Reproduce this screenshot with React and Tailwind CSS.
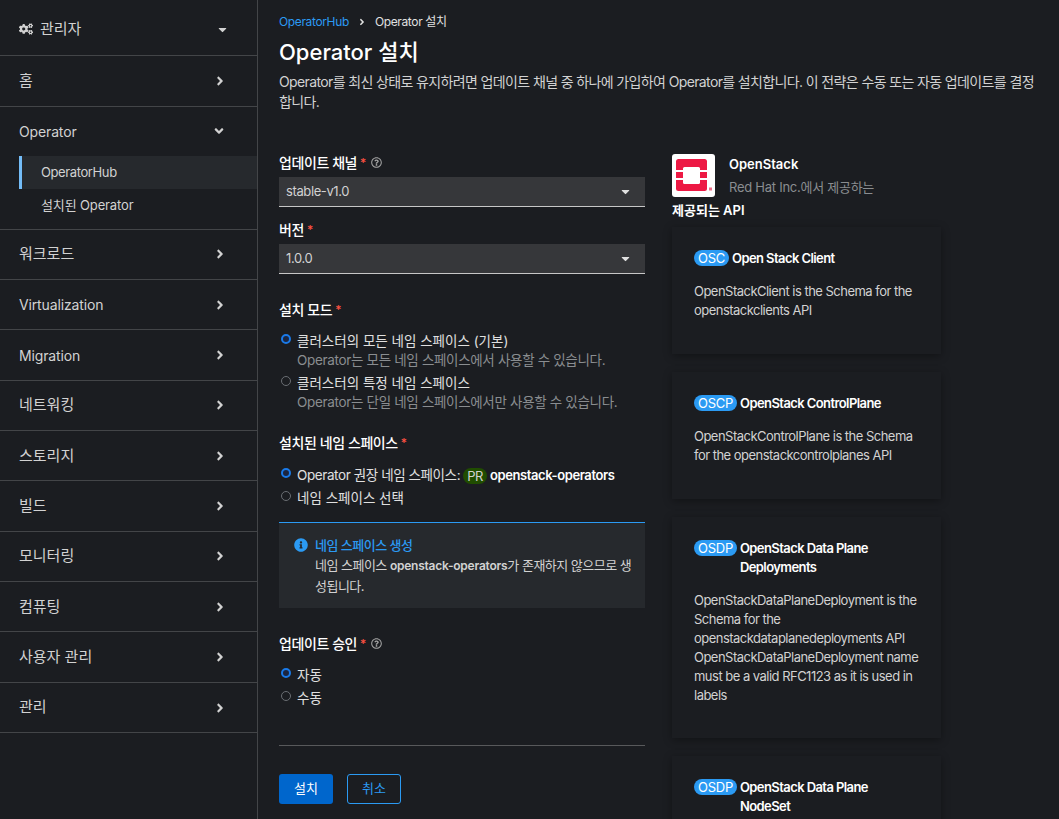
import React from 'react';
import { FaCogs, FaAngleRight, FaAngleDown, FaCaretDown, FaRegQuestionCircle, FaInfoCircle } from 'react-icons/fa';

const navAfter = [
  { label: '워크로드' },
  { label: 'Virtualization', latin: true },
  { label: 'Migration', latin: true },
  { label: '네트워킹' },
  { label: '스토리지' },
  { label: '빌드' },
  { label: '모니터링' },
  { label: '컴퓨팅' },
  { label: '사용자 관리' },
  { label: '관리' },
];

const NavItem = ({ label, latin }) => (
  <div className={`h-[50.35px] border-b border-[#434548] flex items-center justify-between pl-[19px] pr-[32px] text-[#d2d2d2] ${latin ? 'text-[14px] tracking-[-0.01em]' : 'text-[15px]'}`}>
    <span>{label}</span>
    <FaAngleRight className="w-[10px] h-[14px] text-[#d2d2d2]" />
  </div>
);

const Required = () => <span className="text-[#fe5142] ml-[3px] text-[12px]">*</span>;

const Help = () => <FaRegQuestionCircle className="w-[11px] h-[11px] ml-[5px] text-[#a3a3a3]" />;

const Label = ({ children, help }) => (
  <div className="flex items-center text-[14px] leading-[21px] font-medium tracking-[-0.03em] text-white">
    <span>{children}</span>
    <Required />
    {help && <Help />}
  </div>
);

const Radio = ({ checked, children, sub }) => (
  <div className="flex">
    <div className="w-[18px] shrink-0 pl-[2px] pt-[3px]">
      {checked ? (
        <div className="w-[10px] h-[10px] rounded-full bg-[#1b2540] border-[2.5px] border-[#1a7ae8]" />
      ) : (
        <div className="w-[10px] h-[10px] rounded-full bg-[#1b1d21] border-[1.5px] border-[#6a6e73]" />
      )}
    </div>
    <div className="text-[13.5px] leading-[21px] text-[#e0e0e0]">
      <div>{children}</div>
      {sub && <div className="-mt-[2px] mb-[2px] tracking-[-0.024em] text-[#8a8d90]">{sub}</div>}
    </div>
  </div>
);

const Select = ({ value }) => (
  <div className="h-[30px] bg-[#36373a] border-b border-[#c7c7c7] flex items-center justify-between pl-[7px] pr-[13px] text-[13px] tracking-[-0.03em] text-[#d2d2d2]">
    <span>{value}</span>
    <FaCaretDown className="w-[13px] h-[13px] text-[#e0e0e0]" />
  </div>
);

const ApiCard = ({ badge, title, desc, height }) => (
  <div className={`${height} shrink-0 mb-[18px] bg-[#1b1d21] shadow-[0_2px_8px_rgba(3,3,3,0.35)] p-[22px]`}>
    <div className="flex items-start">
      <span className="shrink-0 h-[16px] rounded-full bg-[#2b9af3] text-white text-[13px] tracking-[-0.02em] leading-[16px] px-[4px] mr-[3px] mt-[1px]">{badge}</span>
      <span className="text-[13px] leading-[19px] font-semibold tracking-[-0.045em] text-white">{title}</span>
    </div>
    <p className="mt-[14px] text-[13px] leading-[19px] tracking-[-0.04em] text-[#d2d2d2]">{desc}</p>
  </div>
);

const OpenStackLogo = () => (
  <svg viewBox="0 0 43 43" className="w-[43px] h-[43px] shrink-0 rounded-[3px] bg-white">
    <rect x="4" y="5" width="31" height="32" rx="2.500" fill="#ed1944" />
    <rect x="11" y="13" width="17" height="17" rx="1.500" fill="#ffffff" />
    <path fill="#ffffff" d="M4 16h7v2H4zM4 24h7v2H4zM28 16h7v2h-7zM28 24h7v2h-7z" />
    <rect x="37" y="33.500" width="3" height="3" fill="#ee6f8a" />
  </svg>
);

export default function App() {
  return (
    <div className="flex h-screen overflow-hidden bg-[#1b1d21] font-['Inter','Noto_Sans_CJK_KR',sans-serif]">
      {/* sidebar */}
      <aside className="w-[258px] shrink-0 border-r border-[#434548]">
        <div className="h-[56.4px] pt-[3px] border-b border-[#434548] flex items-center justify-between pl-[19px] pr-[28.5px] text-[15px] text-[#d2d2d2]">
          <span className="flex items-center">
            <FaCogs className="w-[14px] h-[14px] mr-[7px]" />
            관리자
          </span>
          <FaCaretDown className="w-[13px] h-[13px]" />
        </div>
        <NavItem label="홈" />
        <div className="h-[123px] border-b border-[#434548]">
          <div className="h-[49.5px] flex items-center justify-between pl-[19px] pr-[32px] text-[14px] tracking-[-0.01em] text-[#d2d2d2]">
            <span>Operator</span>
            <FaAngleDown className="w-[12px] h-[14px]" />
          </div>
          <div className="ml-[19px] h-[33px] flex items-center bg-[#26292d] border-l-[3px] border-[#73bcf7] pl-[19px] text-[13px] tracking-[-0.03em] text-[#d2d2d2]">OperatorHub</div>
          <div className="ml-[19px] h-[33px] flex items-center pl-[22px] text-[13px] tracking-[-0.01em] text-[#d2d2d2]">설치된 Operator</div>
        </div>
        {navAfter.map((n) => <NavItem key={n.label} label={n.label} latin={n.latin} />)}
      </aside>

      {/* main */}
      <main className="flex-1 min-w-0 pl-[21px] pr-[20px] pt-[13px]">
        <nav className="flex items-center h-[17px] text-[12px] tracking-[-0.03em] text-[#e0e0e0]">
          <span className="text-[#2b9af3]">OperatorHub</span>
          <FaAngleRight className="w-[8px] h-[10px] mx-[9px]" />
          <span>Operator 설치</span>
        </nav>
        <h1 className="mt-[6px] text-[22px] leading-[32px] font-medium text-white">Operator 설치</h1>
        <p className="mt-[4px] text-[14px] leading-[20px] tracking-[-0.045em] text-[#d2d2d2]">Operator를 최신 상태로 유지하려면 업데이트 채널 중 하나에 가입하여 Operator를 설치합니다. 이 전략은 수동 또는 자동 업데이트를 결정합니다.</p>

        <div className="flex mt-[40px]">
          {/* form column */}
          <div className="w-[366px] shrink-0">
            <Label help>업데이트 채널</Label>
            <div className="mt-[4px]"><Select value="stable-v1.0" /></div>
            <div className="mt-[12px]"><Label>버전</Label></div>
            <div className="mt-[4px]"><Select value="1.0.0" /></div>
            <div className="mt-[25px]"><Label>설치 모드</Label></div>
            <div className="mt-[11px] flex flex-col">
              <Radio checked sub="Operator는 모든 네임 스페이스에서 사용할 수 있습니다.">클러스터의 모든 네임 스페이스 (기본)</Radio>
              <Radio sub="Operator는 단일 네임 스페이스에서만 사용할 수 있습니다.">클러스터의 특정 네임 스페이스</Radio>
            </div>
            <div className="mt-[17px]"><Label>설치된 네임 스페이스</Label></div>
            <div className="mt-[12px] flex flex-col gap-[2px]">
              <Radio checked>
                <span className="flex items-center tracking-[-0.03em]">
                  Operator 권장 네임 스페이스:
                  <span className="mx-[3px] h-[16px] rounded-full bg-[#204d00] text-[#d2d2d2] text-[13px] leading-[16px] px-[4px]">PR</span>
                  <span className="text-[13px] font-semibold text-white">openstack-operators</span>
                </span>
              </Radio>
              <Radio>네임 스페이스 선택</Radio>
            </div>
            <div className="mt-[13px] h-[86px] bg-[#26292d] border-t border-[#2b9af3] flex pl-[15px] pr-[12px] pt-[12px]">
              <FaInfoCircle className="w-[14px] h-[14px] mt-[3px] mr-[7px] shrink-0 text-[#2b9af3]" />
              <div className="text-[13px] leading-[20px] tracking-[-0.04em]">
                <div className="font-medium text-[#2b9af3]">네임 스페이스 생성</div>
                <div className="text-[#d2d2d2]">네임 스페이스 <span className="text-[12px] font-semibold tracking-[-0.02em]">openstack-operators</span>가 존재하지 않으므로 생성됩니다.</div>
              </div>
            </div>
            <div className="mt-[25px]"><Label help>업데이트 승인</Label></div>
            <div className="mt-[11px] flex flex-col gap-[2px]">
              <Radio checked>자동</Radio>
              <Radio>수동</Radio>
            </div>
            <div className="mt-[36px] border-t border-[#58595b]" />
            <div className="mt-[28px] flex gap-[14px]">
              <button className="w-[54px] h-[30px] rounded-[3px] bg-[#0066cc] text-white text-[13px]">설치</button>
              <button className="w-[54px] h-[30px] rounded-[3px] border border-[#2b9af3] text-[#2b9af3] text-[13px]">취소</button>
            </div>
          </div>

          {/* api column */}
          <div className="w-[269px] ml-[27px] shrink-0 pt-[2px]">
            <div className="flex">
              <OpenStackLogo />
              <div className="ml-[14px]">
                <div className="text-[13px] leading-[20px] font-semibold text-white">OpenStack</div>
                <div className="mt-[3px] text-[13px] leading-[20px] tracking-[-0.02em] text-[#8a8d90]">Red Hat Inc.에서 제공하는</div>
              </div>
            </div>
            <div className="mt-[4px] text-[13px] leading-[19px] font-semibold text-white">제공되는 API</div>
            <div className="mt-[7.4px] flex flex-col">
              <ApiCard height="h-[127px]" badge="OSC" title="Open Stack Client" desc="OpenStackClient is the Schema for the openstackclients API" />
              <ApiCard height="h-[127px]" badge="OSCP" title="OpenStack ControlPlane" desc="OpenStackControlPlane is the Schema for the openstackcontrolplanes API" />
              <ApiCard height="h-[221px]" badge="OSDP" title="OpenStack Data Plane Deployments" desc="OpenStackDataPlaneDeployment is the Schema for the openstackdataplanedeployments API OpenStackDataPlaneDeployment name must be a valid RFC1123 as it is used in labels" />
              <ApiCard height="h-[222px]" badge="OSDP" title="OpenStack Data Plane NodeSet" desc="" />
            </div>
          </div>
        </div>
      </main>
    </div>
  );
}
